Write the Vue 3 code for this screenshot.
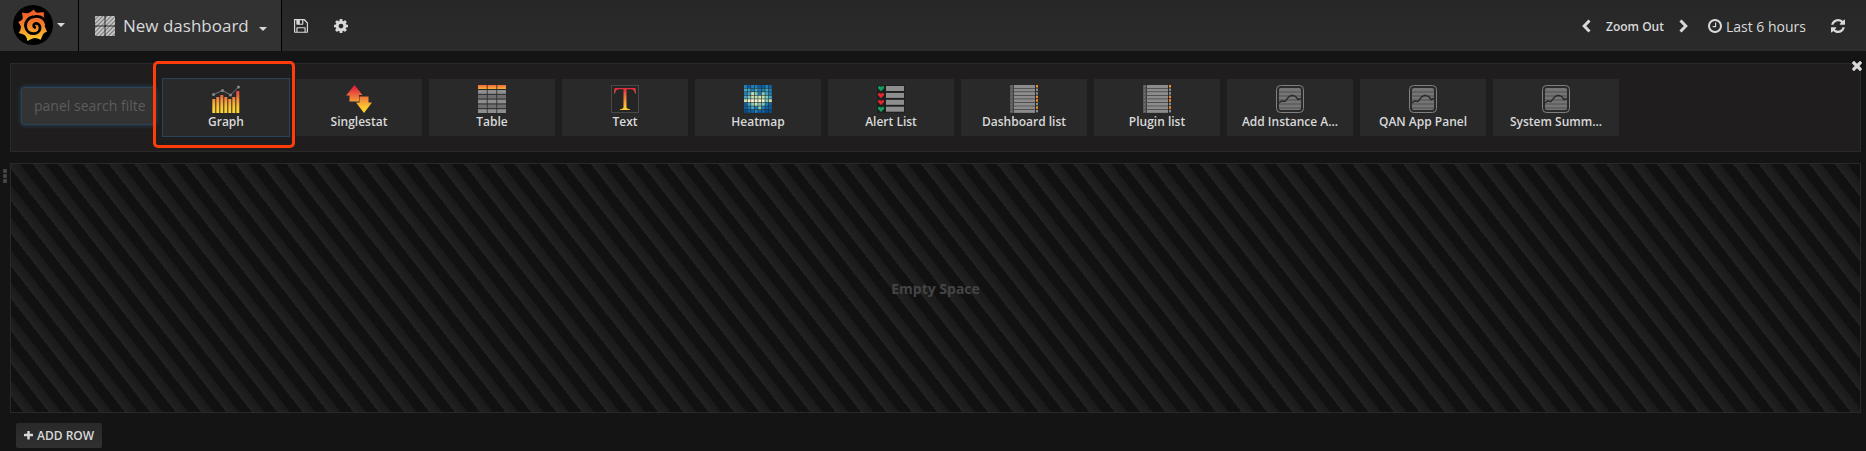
<script setup>
import { ref } from 'vue'

const filter = ref('')

const panels = [
  { name: 'Graph', icon: 'graph', active: true },
  { name: 'Singlestat', icon: 'singlestat' },
  { name: 'Table', icon: 'table' },
  { name: 'Text', icon: 'text' },
  { name: 'Heatmap', icon: 'heatmap' },
  { name: 'Alert List', icon: 'alert' },
  { name: 'Dashboard list', icon: 'list' },
  { name: 'Plugin list', icon: 'list' },
  { name: 'Add Instance A...', icon: 'app' },
  { name: 'QAN App Panel', icon: 'app' },
  { name: 'System Summ...', icon: 'app' },
]

const bars = [14, 16, 18, 16, 14, 16, 22]

const heat = [
  '21221121',
  '33232232',
  '23542432',
  '34555543',
  '56666645',
  '13454421',
  '12324211',
  '01121100',
]
const heatColors = ['#084b8c', '#0d5fa6', '#1d7fb8', '#41a6c4', '#7fc9bd', '#c3e0b4', '#f1f3cf']

const glyphs = {
  save: 'M512 1536h768v-384h-768v384zm896 0h128v-896q0-14-10-38.5t-20-34.5l-281-281q-10-10-34-20t-39-10v416q0 40-28 68t-68 28h-576q-40 0-68-28t-28-68v-416h-128v1280h128v-416q0-40 28-68t68-28h832q40 0 68 28t28 68v416zm-384-928v-320q0-13-9.5-22.5t-22.5-9.5h-192q-13 0-22.5 9.5t-9.5 22.5v320q0 13 9.5 22.5t22.5 9.5h192q13 0 22.5-9.5t9.5-22.5zm640 32v896q0 40-28 68t-68 28h-1344q-40 0-68-28t-28-68v-1344q0-40 28-68t68-28h928q40 0 88 20t76 48l280 280q28 28 48 76t20 88z',
  cog: 'M1152 896q0-106-75-181t-181-75-181 75-75 181 75 181 181 75 181-75 75-181zm512-109v222q0 12-8 23t-20 13l-185 28q-19 54-39 91 35 50 107 138 10 12 10 25t-9 23q-27 37-99 108t-94 71q-12 0-26-9l-138-108q-44 23-91 38-16 136-29 186-7 28-36 28h-222q-14 0-24.5-8.5t-11.5-21.5l-28-184q-49-16-90-37l-141 107q-10 9-25 9-14 0-25-11-126-114-165-168-7-10-7-23 0-12 8-23 15-21 51-66.5t54-70.5q-27-50-41-99l-183-27q-13-2-21-12.5t-8-23.5v-222q0-12 8-23t19-13l186-28q14-46 39-92-40-57-107-138-10-12-10-24 0-10 9-23 26-36 98.5-107.5t94.5-71.5q13 0 26 10l138 107q44-23 91-38 16-136 29-186 7-28 36-28h222q14 0 24.5 8.5t11.5 21.5l28 184q49 16 90 37l142-107q9-9 24-9 13 0 25 10 129 119 165 170 7 8 7 22 0 12-8 23-15 21-51 66.5t-54 70.5q26 50 41 98l183 28q13 2 21 12.5t8 23.5z',
  clock: 'M1024 544v448q0 14-9 23t-23 9h-320q-14 0-23-9t-9-23v-64q0-14 9-23t23-9h224v-352q0-14 9-23t23-9h64q14 0 23 9t9 23zm416 352q0-148-73-273t-198-198-273-73-273 73-198 198-73 273 73 273 198 198 273 73 273-73 198-198 73-273zm224 0q0 209-103 385.5t-279.5 279.5-385.5 103-385.5-103-279.5-279.5-103-385.5 103-385.5 279.5-279.5 385.5-103 385.5 103 279.5 279.5 103 385.5z',
  refresh: 'M1639 1056q0 5-1 7-64 268-268 434.5t-478 166.5q-146 0-282.5-55t-243.5-157l-129 129q-19 19-45 19t-45-19-19-45v-448q0-26 19-45t45-19h448q26 0 45 19t19 45-19 45l-137 137q71 66 161 102t187 36q134 0 250-65t186-179q11-17 53-117 8-23 30-23h192q13 0 22.5 9.5t9.5 22.5zm25-800v448q0 26-19 45t-45 19h-448q-26 0-45-19t-19-45 19-45l138-138q-148-137-349-137-134 0-250 65t-186 179q-11 17-53 117-8 23-30 23h-199q-13 0-22.5-9.5t-9.5-22.5v-7q65-268 270-434.5t480-166.5q146 0 284 55.5t245 156.5l130-129q19-19 45-19t45 19 19 45z',
  times: 'M1490 1322q0 40-28 68l-136 136q-28 28-68 28t-68-28l-294-294-294 294q-28 28-68 28t-68-28l-136-136q-28-28-28-68t28-68l294-294-294-294q-28-28-28-68t28-68l136-136q28-28 68-28t68 28l294 294 294-294q28-28 68-28t68 28l136 136q28 28 28 68t-28 68l-294 294 294 294q28 28 28 68z',
  plus: 'M1600 736v192q0 40-28 68t-68 28h-416v416q0 40-28 68t-68 28h-192q-40 0-68-28t-28-68v-416h-416q-40 0-68-28t-28-68v-192q0-40 28-68t68-28h416v-416q0-40 28-68t68-28h192q40 0 68 28t28 68v416h416q40 0 68 28t28 68z',
}
</script>

<template>
  <div class="dashboard">
    <svg class="defs" aria-hidden="true">
      <defs>
        <linearGradient id="fire" x1="0" y1="3" x2="0" y2="28" gradientUnits="userSpaceOnUse">
          <stop offset="0" stop-color="#e2293b" />
          <stop offset="0.5" stop-color="#f2953a" />
          <stop offset="0.75" stop-color="#fdc42f" />
          <stop offset="1" stop-color="#fdd835" />
        </linearGradient>
        <linearGradient id="sun" x1="0" y1="5" x2="0" y2="36" gradientUnits="userSpaceOnUse">
          <stop offset="0" stop-color="#f05a28" />
          <stop offset="0.45" stop-color="#f47b2a" />
          <stop offset="1" stop-color="#fdd02a" />
        </linearGradient>
        <linearGradient id="head" x1="0" y1="0" x2="0" y2="1">
          <stop offset="0" stop-color="#ef6a3a" />
          <stop offset="1" stop-color="#fbb034" />
        </linearGradient>
        <pattern id="hatch" width="3" height="3" patternUnits="userSpaceOnUse" patternTransform="rotate(45)">
          <rect width="3" height="3" fill="#777" />
          <rect width="2" height="3" fill="#c4c4c4" />
        </pattern>
      </defs>
    </svg>

    <header class="navbar">
      <button class="brand" type="button" aria-label="Main menu">
        <svg class="logo" viewBox="0 0 40 40">
          <circle cx="20" cy="20" r="20" fill="#000" />
          <path
            fill="url(#sun)"
            d="M20.7 4.4 Q22.3 7.2 24.2 7.7 Q28.2 7.1 31.2 7.5 Q30.2 10.4 31.2 12.7 Q33.3 16 33.8 19.4 L31.6 20.2 Q32.3 23.3 34 26.7 Q31.1 27.3 29.9 29.4 Q28.8 32.2 27.6 34.7 Q24.3 32.8 21.2 33 Q17.8 34.2 14.4 36.1 Q13.8 32.2 12 30.3 Q9.4 29 5.7 28.1 Q8.1 24.7 8 21.8 Q7 19.3 5.3 17 Q8.8 15.7 9.7 13.7 Q9.8 10.8 8.9 7.4 Q12.8 8.5 15.4 8 Q18.2 6.7 20.7 4.4Z"
          />
          <path
            fill="none"
            stroke="#000"
            stroke-width="2.8"
            stroke-linecap="round"
            d="M33.8 21.5 C33 14 28 10.8 22 11.5 C15.5 12 12 16.5 12.6 21.5 C13.2 26.5 17.2 29 21.5 28.6 C25.5 28 27.3 25 27 22 C26.5 19 24 17.7 21.8 18.8 C20.2 19.8 20.4 21.8 21.8 22.4"
          />
        </svg>
        <span class="caret"></span>
      </button>

      <button class="title" type="button">
        <svg class="tiles" viewBox="0 0 20 20" aria-hidden="true">
          <g fill="url(#hatch)">
            <rect width="9.500" height="9.500" rx="1" />
            <rect x="10.500" width="9.500" height="9.500" rx="1" />
            <rect y="10.500" width="9.500" height="9.500" rx="1" />
            <rect x="10.500" y="10.500" width="9.500" height="9.500" rx="1" />
          </g>
        </svg>
        <span class="title-text">New dashboard</span>
        <span class="caret low"></span>
      </button>

      <div class="actions">
        <button class="plain" type="button" aria-label="Save dashboard">
          <svg class="fa" viewBox="128 128 1536 1536"><path :d="glyphs.save" /></svg>
        </button>
        <button class="plain" type="button" aria-label="Settings">
          <svg class="fa" viewBox="128 128 1536 1536"><path :d="glyphs.cog" /></svg>
        </button>
      </div>

      <div class="time">
        <button class="plain" type="button" aria-label="Shift time backward">
          <svg class="chev" viewBox="0 0 9 14"><path d="M7.5 1.5 2.2 7 7.5 12.5" /></svg>
        </button>
        <button class="plain zoom" type="button">Zoom Out</button>
        <button class="plain" type="button" aria-label="Shift time forward">
          <svg class="chev" viewBox="0 0 9 14"><path d="M1.5 1.5 6.8 7 1.5 12.5" /></svg>
        </button>
        <button class="plain range" type="button">
          <svg class="fa" viewBox="128 128 1536 1536"><path :d="glyphs.clock" /></svg>
          <span>Last 6 hours</span>
        </button>
        <button class="plain" type="button" aria-label="Refresh">
          <svg class="fa" viewBox="128 128 1536 1536"><path :d="glyphs.refresh" /></svg>
        </button>
      </div>
    </header>

    <main class="content">
      <section class="picker" aria-label="Add panel">
        <input v-model="filter" class="search" type="text" placeholder="panel search filter" aria-label="Panel search filter" />
        <button
          v-for="p in panels"
          :key="p.name"
          type="button"
          class="panel"
          :class="{ active: p.active }"
        >
          <svg class="panel-icon" viewBox="0 0 28 28" aria-hidden="true">
            <g v-if="p.icon === 'graph'">
              <rect
                v-for="(h, i) in bars"
                :key="i"
                :x="i * 4 + 0.3"
                :y="28 - h"
                width="3"
                :height="h"
                fill="url(#fire)"
              />
              <path d="M1.5 9.5 10.5 5.5 18.5 10 26.5 2" fill="none" stroke="#777" />
              <g fill="#888">
                <circle cx="1.5" cy="9.5" r="1.5" />
                <circle cx="10.5" cy="5.5" r="1.5" />
                <circle cx="18.5" cy="10" r="1.5" />
                <circle cx="26.5" cy="2" r="1.5" />
              </g>
            </g>
            <g v-else-if="p.icon === 'singlestat'" fill="url(#fire)">
              <path d="M9.5 0 17.5 10H14V16.5H4.5V10.500H1Z" />
              <path d="M14.500 11.500H23.500V17.500H27L19 28 11 17.500H14.500Z" />
            </g>
            <g v-else-if="p.icon === 'table'">
              <g v-for="c in 3" :key="c">
                <rect :x="(c - 1) * 9.6" y="0" width="8.800" height="4" fill="url(#head)" />
                <rect
                  v-for="r in 5"
                  :key="r"
                  :x="(c - 1) * 9.6"
                  :y="r * 4.8 + 0.2"
                  width="8.800"
                  height="3.800"
                  :fill="r % 2 ? '#8e8e8e' : '#6f6f71'"
                />
              </g>
            </g>
            <g v-else-if="p.icon === 'text'">
              <rect x="0.5" y="0.5" width="27" height="27" fill="#252525" stroke="#484848" />
              <path
                fill="url(#fire)"
                d="M3.500 3H24.500L25 8.500H24Q23.500 4.200 20 4.200H15.500V22Q15.500 24 19 24.300V25H9V24.300Q12.500 24 12.500 22V4.200H8Q4.500 4.200 4 8.500H3Z"
              />
            </g>
            <g v-else-if="p.icon === 'heatmap'">
              <g v-for="(row, y) in heat" :key="y">
                <rect
                  v-for="(v, x) in row"
                  :key="x"
                  :x="x * 3.55"
                  :y="y * 3.55"
                  width="3"
                  height="3"
                  :fill="heatColors[v]"
                />
              </g>
            </g>
            <g v-else-if="p.icon === 'alert'">
              <rect width="28" height="28" fill="#1f1f1f" />
              <g v-for="n in 4" :key="n" :transform="`translate(0 ${(n - 1) * 6.9})`">
                <path
                  d="M4 6.300 1 3.300Q0.500 1.200 2.300 1.100 3.500 1.100 4 2.200 4.500 1.100 5.700 1.100 7.500 1.200 7 3.300Z"
                  :fill="n === 1 || n === 4 ? '#12a05a' : '#e0262f'"
                />
                <rect x="9" y="1" width="18" height="5" fill="#8e8e8e" />
              </g>
            </g>
            <g v-else-if="p.icon === 'list'">
              <rect width="3.500" height="28" fill="#5a5a5a" />
              <g v-for="n in 8" :key="n">
                <rect x="4" :y="(n - 1) * 3.55" width="21" height="3" fill="#8c8c8c" />
                <rect x="1" :y="(n - 1) * 3.55 + 1" width="1" height="1" fill="#858585" />
                <rect
                  x="26"
                  :y="(n - 1) * 3.55"
                  width="2"
                  height="2.500"
                  :fill="[1, 4, 5, 7].includes(n) ? '#ef8e2c' : '#8c8c8c'"
                />
              </g>
              <path d="M7 14.500H22M8 21H20" stroke="#777" />
            </g>
            <g v-else>
              <rect x="0.500" y="0.500" width="27" height="27" rx="4" fill="#2b2b2b" stroke="#808080" />
              <rect x="3" y="3" width="22" height="22" rx="2" fill="#757575" />
              <path d="M3 7H25M3 11H25M3 15H25M3 19H25M3 23H25" stroke="#505050" />
              <path d="M3 18 5.500 16 9 16.500 13 11.500 16 10.300 19.500 11.300 22 14.500 25 13.500" fill="none" stroke="#2b2b2b" stroke-width="1.500" />
            </g>
          </svg>
          <span class="panel-name">{{ p.name }}</span>
        </button>
        <button class="plain close" type="button" aria-label="Close">
          <svg viewBox="302 366 1188 1188"><path :d="glyphs.times" /></svg>
        </button>
      </section>

      <section class="row">
        <button class="plain handle" type="button" aria-label="Row menu"><i></i><i></i><i></i></button>
        <div class="empty">Empty Space</div>
      </section>

      <button class="add" type="button">
        <svg viewBox="192 192 1408 1408" aria-hidden="true"><path :d="glyphs.plus" /></svg>
        <span>ADD ROW</span>
      </button>
    </main>
  </div>
</template>

<style>
html,
body {
  background: #141414;
}
</style>

<style scoped>
.dashboard {
  min-height: 100vh;
  background: #141414;
  color: #d8d9da;
  font-family: "Open Sans", "Noto Sans", sans-serif;
  font-size: 12px;
  font-weight: 600;
}
.dashboard *,
.dashboard {
  box-sizing: border-box;
}
.defs {
  position: absolute;
  width: 0;
  height: 0;
}
button,
input {
  margin: 0;
  border: 0;
  color: inherit;
  font: inherit;
}
button {
  display: flex;
  align-items: center;
  cursor: pointer;
}
svg {
  display: block;
  flex: none;
  fill: currentColor;
}
.plain {
  padding: 0;
  background: none;
}
.navbar {
  display: flex;
  height: 51px;
  background: linear-gradient(#272727, #2b2b2b);
}
.brand {
  gap: 4px;
  width: 79px;
  padding: 0 0 1px 13px;
  background: #323232;
  border-right: 1px solid #000;
}
.logo {
  width: 40px;
  height: 40px;
}
.caret {
  border: 4px solid transparent;
  border-top-color: currentColor;
  border-bottom: 0;
}
.caret.low {
  margin: 6px 0 0 2px;
}
.title {
  gap: 8px;
  padding: 1px 14px 0 16px;
  background: #323232;
  border-right: 1px solid #000;
}
.tiles {
  width: 20px;
  height: 20px;
}
.title-text {
  font-size: 17px;
  font-weight: 500;
  line-height: 24px;
}
.actions {
  display: flex;
  align-items: center;
  gap: 26px;
  padding: 1px 0 0 12px;
}
.fa {
  width: 14px;
  height: 14px;
}
.time {
  display: flex;
  align-items: center;
  gap: 15px;
  margin-left: auto;
  padding: 1px 21px 0 0;
}
.chev {
  width: 9px;
  height: 14px;
}
.chev path {
  fill: none;
  stroke: currentColor;
  stroke-width: 3px;
}
.range {
  gap: 4px;
  margin: 0 10px 0 5px;
  font-size: 14px;
  font-weight: 500;
}
.content {
  padding: 12px 5px 0 0;
}
.picker {
  position: relative;
  display: flex;
  align-items: center;
  gap: 7px;
  height: 89px;
  margin-left: 10px;
  padding-left: 10px;
  background: #1f1d1d;
  border: 1px solid #292929;
}
.search {
  width: 135px;
  height: 38px;
  margin-bottom: 4px;
  padding: 0 10px 0 12px;
  background: #333;
  border: 1px solid #2b4358;
  border-radius: 3px;
  outline: 0;
  box-shadow: 0 0 5px #2b4a66;
  font-size: 14px;
  font-weight: 400;
}
.search::placeholder {
  color: #5c5c5c;
  opacity: 1;
}
.panel {
  position: relative;
  flex-direction: column;
  flex: none;
  width: 126px;
  height: 57px;
  padding: 6px 0 0;
  background: #292929;
}
.panel.active {
  outline: 1px solid #2b4358;
}
.panel.active::after {
  content: "";
  position: absolute;
  inset: -18px -6px -12px -10px;
  border: 3px solid #ff3c0a;
  border-radius: 5px;
}
.panel-icon {
  width: 28px;
  height: 28px;
}
.panel-name {
  line-height: 17px;
  white-space: nowrap;
}
.close {
  position: absolute;
  top: -3px;
  right: -2px;
}
.close svg {
  width: 10px;
  height: 10px;
}
.row {
  display: flex;
  align-items: stretch;
  margin-top: 11px;
}
.handle {
  flex-direction: column;
  gap: 1px;
  width: 10px;
  padding-top: 6px;
}
.handle i {
  width: 4px;
  height: 4px;
  border-radius: 1px;
  background: #444;
}
.empty {
  display: flex;
  flex: 1;
  align-items: center;
  justify-content: center;
  height: 250px;
  background: repeating-linear-gradient(-128deg, #111, #111 10px, #191919 10px, #222 20px);
  border: 1px solid #292929;
  color: #444;
  font-size: 14px;
  font-weight: 700;
}
.add {
  gap: 4px;
  height: 25px;
  margin: 10px 0 0 16px;
  padding: 0 8px;
  background: linear-gradient(#292929, #303030);
  border-radius: 2px;
}
.add svg {
  width: 9px;
  height: 9px;
}
</style>
